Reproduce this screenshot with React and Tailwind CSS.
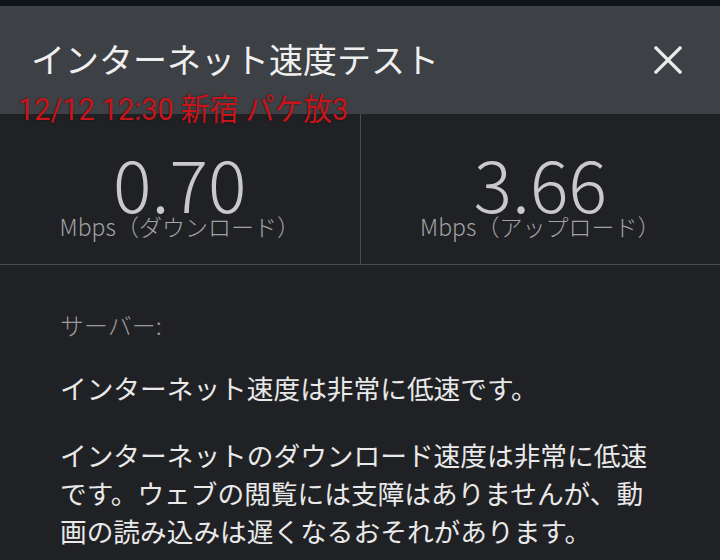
const jp = { fontFamily: '"Noto Sans CJK JP", "Noto Sans", sans-serif' };

function CloseIcon() {
  return (
    <svg width="28" height="28" viewBox="0 0 28 28" className="text-[#ececec]">
      <path d="M2 2 L26 26 M26 2 L2 26" stroke="currentColor" strokeWidth="3.2" strokeLinecap="square" />
    </svg>
  );
}

function Speed({ value, label }) {
  return (
    <div className="flex flex-1 flex-col items-center pt-[38px]">
      <div className="text-[72px] leading-[60px] font-light text-[#c9c9c9]">{value}</div>
      <div className="text-[23px] leading-[28px] text-[#a3a3a3] font-light">{label}</div>
    </div>
  );
}

export default function App() {
  return (
    <div className="relative h-[560px] w-[720px] overflow-hidden bg-[#202125]" style={jp}>
      <div className="h-[6px] bg-[#0f131a]" />
      <div className="flex h-[108px] items-center justify-between bg-[#3d4044] pl-[31px] pr-[38px]">
        <h1 className="text-[34px] leading-none text-[#efefef] pb-[2px]">インターネット速度テスト</h1>
        <CloseIcon />
      </div>

      <div className="flex h-[151px] border-b border-[#4a4b4e]">
        <Speed value="0.70" label="Mbps（ダウンロード）" />
        <div className="w-px bg-[#4a4b4e]" />
        <Speed value="3.66" label="Mbps（アップロード）" />
      </div>

      <div className="px-[60px] pt-[41px] text-[26.7px] leading-[38px] text-[#e9e9e9]">
        <div className="text-[24px] font-light text-[#9c9c9c]">サーバー:</div>
        <p className="mt-[25px]">インターネット速度は非常に低速です。</p>
        <p className="mt-[29px]">
          インターネットのダウンロード速度は非常に低速です。ウェブの閲覧には支障はありませんが、動画の読み込みは遅くなるおそれがあります。
        </p>
      </div>

      <div
        className="absolute left-[18px] top-[91px] origin-left scale-x-[0.93] whitespace-nowrap text-[31px] leading-[38px] text-[#c8151b] [text-shadow:0_0_2px_rgba(0,0,0,0.6)]"
        style={{ fontFamily: 'Roboto, "Noto Sans CJK JP", sans-serif' }}
      >
        12/12 12:30 新宿 パケ放3
      </div>
    </div>
  );
}
